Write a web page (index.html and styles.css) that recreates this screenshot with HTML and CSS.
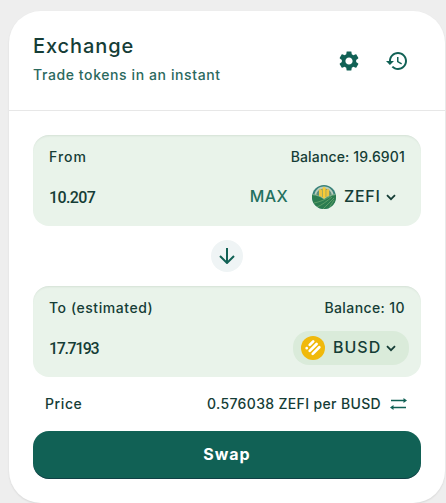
FILE: index.html
```html
<!DOCTYPE html>
<html lang="en">
<head>
  <meta charset="UTF-8">
  <title>Exchange</title>
  <meta name="viewport" content="width=device-width, initial-scale=1.0">
  <link rel="stylesheet" href="styles.css">
</head>
<body>
  <div class="card">
    <div class="card-header">
      <div class="titles">
        <h2>Exchange</h2>
        <p>Trade tokens in an instant</p>
      </div>
      <button class="icon-btn" aria-label="Settings">
        <svg width="24" height="24" viewBox="0 0 24 24"><path d="M19.14 12.94c.04-.3.06-.61.06-.94 0-.32-.02-.64-.07-.94l2.03-1.58c.18-.14.23-.41.12-.61l-1.92-3.32c-.12-.22-.37-.29-.59-.22l-2.39.96c-.5-.38-1.03-.7-1.62-.94l-.36-2.54c-.04-.24-.24-.41-.48-.41h-3.84c-.24 0-.43.17-.47.41l-.36 2.54c-.59.24-1.13.57-1.62.94l-2.39-.96c-.22-.08-.47 0-.59.22L2.74 8.87c-.12.21-.08.47.12.61l2.03 1.58c-.05.3-.09.63-.09.94s.02.64.07.94l-2.03 1.58c-.18.14-.23.41-.12.61l1.92 3.32c.12.22.37.29.59.22l2.39-.96c.5.38 1.03.7 1.62.94l.36 2.54c.05.24.24.41.48.41h3.84c.24 0 .44-.17.47-.41l.36-2.54c.59-.24 1.13-.56 1.62-.94l2.39.96c.22.08.47 0 .59-.22l1.92-3.32c.12-.22.07-.47-.12-.61l-2.01-1.58zM12 15.6c-1.98 0-3.6-1.62-3.6-3.6s1.62-3.6 3.6-3.6 3.6 1.62 3.6 3.6-1.62 3.6-3.6 3.6z"/></svg>
      </button>
      <button class="icon-btn" aria-label="History">
        <svg width="24" height="24" viewBox="0 0 24 24"><path d="M13 3c-4.97 0-9 4.03-9 9H1l3.89 3.89.07.14L9 12H6c0-3.87 3.13-7 7-7s7 3.13 7 7-3.13 7-7 7c-1.93 0-3.68-.79-4.94-2.06l-1.42 1.42C8.27 19.99 10.51 21 13 21c4.97 0 9-4.03 9-9s-4.03-9-9-9zm-1 5v5l4.28 2.54.72-1.21-3.5-2.08V8H12z"/></svg>
      </button>
    </div>

    <div class="card-body">
      <div class="panel">
        <div class="row labels">
          <span class="from">From</span>
          <span class="balance">Balance: 19.6901</span>
        </div>
        <div class="row">
          <span class="amount">10.207</span>
          <span class="max">MAX</span>
          <button class="token">
            <svg class="coin" width="24" height="24" viewBox="0 0 24 24">
              <clipPath id="disc"><circle cx="12" cy="12" r="12"/></clipPath>
              <g clip-path="url(#disc)">
                <rect width="24" height="24" fill="#39827a"/>
                <path d="M2 13C2 6 6 1.500 12 1.500S22 6 22 13z" fill="#b9cdbd"/>
                <path d="M4 12C4 7 7 3.500 12 3.500S20 7 20 12z" fill="#5f8f7c"/>
                <rect x="7" y="4" width="3" height="9" rx="1.500" fill="#f0c43e"/>
                <rect x="10.500" y="2" width="3.200" height="12" rx="1.600" fill="#f9cb36"/>
                <rect x="14.200" y="4" width="3" height="9" rx="1.500" fill="#f0c43e"/>
                <path d="M0 9c5 .5 9 2.500 12 5C15 11.500 19 9.500 24 9v15H0z" fill="#2b7c50"/>
                <path d="M0 9.500c5 .5 9 2 12 4.500 3-2.500 7-4 12-4.500" fill="none" stroke="#a6c9a9" stroke-width=".7"/>
                <path d="M2 18C7 17 13 15 19 11M5 22c5-2 10-6 15-10M11 24c3-3 7-7 11-11M17 24c1-3 3-6 5-9" fill="none" stroke="#73ae73" stroke-width=".7"/>
              </g>
            </svg>
            <span class="zefi">ZEFI</span>
            <svg class="chevron" width="10" height="7" viewBox="0 0 10 7"><path d="M1 1.200l4 4 4-4"/></svg>
          </button>
        </div>
      </div>

      <button class="switch" aria-label="Switch tokens">
        <svg width="16" height="16" viewBox="0 0 16 16"><path d="M8 0v14.500M1 8l7 7 7-7"/></svg>
      </button>

      <div class="panel">
        <div class="row labels">
          <span class="to">To (estimated)</span>
          <span class="balance short">Balance: 10</span>
        </div>
        <div class="row">
          <span class="amount long">17.7193</span>
          <button class="token selected">
            <svg class="coin" width="24" height="24" viewBox="0 0 24 24">
              <circle cx="12" cy="12" r="12" fill="#f0b90b"/>
              <path d="M8.700 8.900l3.500-3.500M5.700 12.200h.01M8.700 14.900l6.900-6.900M11.700 17.900l6.600-6.600" stroke="#fff" stroke-width="2.700" stroke-linecap="round"/>
            </svg>
            <span class="busd">BUSD</span>
            <svg class="chevron" width="10" height="7" viewBox="0 0 10 7"><path d="M1 1.200l4 4 4-4"/></svg>
          </button>
        </div>
      </div>

      <div class="price">
        <span class="price-label">Price</span>
        <span class="rate">0.576038 ZEFI per BUSD</span>
        <svg width="17" height="12" viewBox="0 0 17 12">
          <path d="M1 2.500h14M2 9.500h14" fill="none" stroke="#116155" stroke-width="1.600"/>
          <path d="M13.500 0L17 2.500 13.500 5zM3.500 7L0 9.500 3.500 12z" fill="#116155"/>
        </svg>
      </div>

      <button class="swap">Swap</button>
    </div>
  </div>
</body>
</html>
```
FILE: styles.css
```css
* {
  box-sizing: border-box;
}

body {
  margin: 0;
  padding: 11px 1px 0 9px;
  background: #eee;
  color: #153d36;
  font-family: Inter, sans-serif;
  font-size: 14px;
  font-weight: 500;
  overflow: hidden;
}

button {
  border: 0;
  padding: 0;
  background: none;
  color: inherit;
  font: inherit;
}

svg {
  display: block;
}

.card {
  height: 492px;
  background: #fff;
  border-radius: 32px;
  box-shadow: 0 1px 2px #00000018;
}

.card-header {
  display: flex;
  align-items: center;
  height: 100px;
  padding: 0 24px;
  border-bottom: 1px solid #e7e7e7;
}

.titles {
  flex: 1;
  padding-bottom: 2px;
}

h2 {
  margin: 0 0 8px;
  font-size: 20px;
  font-weight: 500;
  line-height: 22px;
  letter-spacing: 0.9px;
}

p {
  margin: 0;
  color: #2b695e;
  line-height: 20px;
  letter-spacing: 0.6px;
}

.icon-btn {
  display: flex;
  align-items: center;
  justify-content: center;
  width: 48px;
  height: 48px;
  fill: #116155;
}

.card-body {
  display: flex;
  flex-direction: column;
  padding: 24px;
}

.panel {
  height: 91px;
  padding: 11px 12px 0 16px;
  background: #e9f3ea;
  border-radius: 16px;
  box-shadow: inset 0 2px 2px -1px #4a685020;
}

.row {
  display: flex;
  align-items: center;
  height: 34px;
}

.labels {
  justify-content: space-between;
  height: 21px;
  padding-right: 4px;
  margin-bottom: 13px;
}

.from {
  letter-spacing: 1px;
}

.to {
  letter-spacing: 0.55px;
}

.balance {
  letter-spacing: 0.15px;
}

.balance.short {
  letter-spacing: 0.4px;
}

.amount {
  flex: 1;
  padding-top: 1px;
  font-family: Roboto, sans-serif;
  font-size: 16px;
  letter-spacing: -0.6px;
}

.amount.long {
  letter-spacing: -1.4px;
}

.max {
  margin-right: 16px;
  padding-bottom: 2px;
  color: #23705f;
  font-size: 16px;
  letter-spacing: 0.4px;
}

.token {
  display: flex;
  align-items: center;
  width: 105px;
  height: 34px;
  padding: 0 13px 0 8px;
  border-radius: 16px;
  font-size: 16px;
}

.token.selected {
  width: 116px;
  background: #daebda;
}

.coin {
  margin-right: 8px;
}

.zefi,
.busd {
  padding-bottom: 2px;
}

.zefi {
  letter-spacing: 0.7px;
}

.busd {
  letter-spacing: 1px;
}

.chevron {
  margin-left: auto;
  fill: none;
  stroke: #153d36;
  stroke-width: 1.8;
}

.switch {
  display: flex;
  align-items: center;
  justify-content: center;
  align-self: center;
  width: 32px;
  height: 32px;
  margin: 14px 0;
  border-radius: 50%;
  background: #eff4f5;
}

.switch svg {
  fill: none;
  stroke: #116155;
  stroke-width: 2;
}

.price {
  display: flex;
  align-items: center;
  height: 54px;
  padding: 0 14px 0 12px;
}

.price-label,
.rate {
  padding-bottom: 2px;
}

.price-label {
  letter-spacing: 0.6px;
}

.rate {
  margin-left: auto;
  margin-right: 9px;
  letter-spacing: 0.35px;
}

.swap {
  height: 48px;
  padding-bottom: 2px;
  border-radius: 16px;
  background: #116155;
  box-shadow: inset 0 -1px 0 #0e0e2c66;
  color: #fff;
  font-size: 16px;
  font-weight: 700;
  letter-spacing: 1px;
}
```
